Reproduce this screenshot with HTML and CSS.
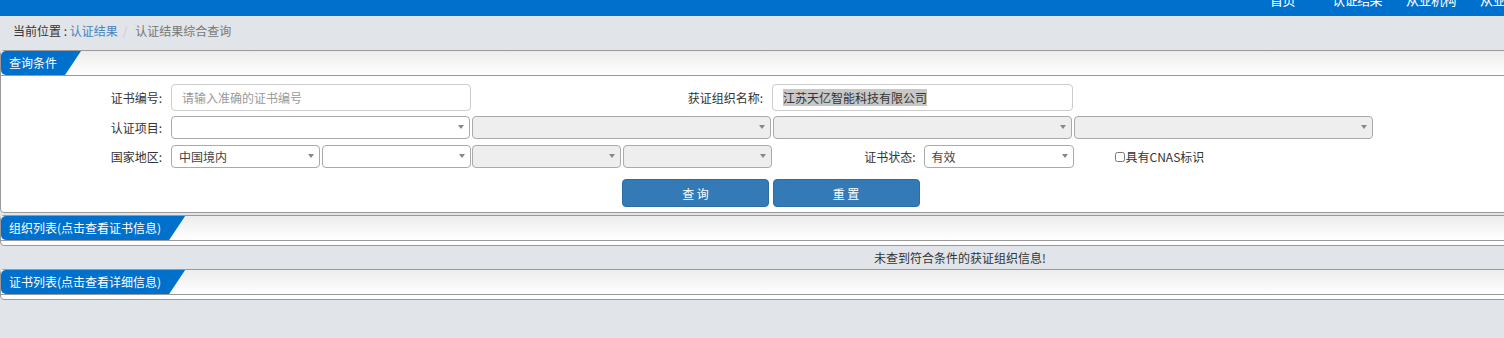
FILE: index.html
```html
<!DOCTYPE html>
<html lang="zh-CN">
  <head>
    <meta charset="UTF-8" />
    <meta name="viewport" content="width=device-width, initial-scale=1.0" />
    <title>认证结果综合查询</title>
    <link rel="stylesheet" href="styles.css">
  </head>

  <body>
    <div class="page">
      <div class="topbar">
        <ul class="nav">
          <li>首页</li>
          <li>认证结果</li>
          <li>从业机构</li>
          <li>从业人员</li>
        </ul>
      </div>

      <ol class="breadcrumb">
        <li>当前位置 : <a href="#">认证结果</a></li>
        <li class="active">认证结果综合查询</li>
      </ol>

      <!-- 查询条件 -->
      <div class="panel">
        <div class="panel__head"><span class="panel__tab">查询条件</span></div>
        <div class="panel__body">
          <div class="row">
            <label class="lbl">证书编号:</label>
            <input class="field field--a" type="text" placeholder="请输入准确的证书编号" />
            <label class="lbl lbl--org">获证组织名称:</label>
            <div class="field field--b"><span class="picked">江苏天亿智能科技有限公司</span></div>
          </div>

          <div class="row row--2">
            <label class="lbl">认证项目:</label>
            <div class="select select--wide"></div>
            <div class="select select--wide select--off"></div>
            <div class="select select--wide select--off"></div>
            <div class="select select--wide select--off"></div>
          </div>

          <div class="row row--3">
            <label class="lbl">国家地区:</label>
            <div class="select select--half">中国境内</div>
            <div class="select select--half"></div>
            <div class="select select--half select--off"></div>
            <div class="select select--half select--off"></div>
            <label class="lbl lbl--status">证书状态:</label>
            <div class="select select--status">有效</div>
            <label class="check"><input type="checkbox" />具有CNAS标识</label>
          </div>

          <div class="actions">
            <button class="btn">查 询</button>
            <button class="btn">重 置</button>
          </div>
        </div>
      </div>

      <!-- 组织列表 -->
      <div class="panel panel--list">
        <div class="panel__head"><span class="panel__tab">组织列表(点击查看证书信息)</span></div>
        <div class="panel__body panel__body--empty"></div>
      </div>
      <div class="message">未查到符合条件的获证组织信息!</div>

      <!-- 证书列表 -->
      <div class="panel panel--list">
        <div class="panel__head"><span class="panel__tab">证书列表(点击查看详细信息)</span></div>
        <div class="panel__body panel__body--empty"></div>
      </div>
    </div>
  </body>
</html>
```

FILE: styles.css
```css
/* CSS Reset */
html {
  box-sizing: border-box;
  font-size: 12px;
  overflow: hidden;
}

*,
*:before,
*:after {
  box-sizing: inherit;
}

body,
ol,
ul {
  margin: 0;
  padding: 0;
}

ol,
ul {
  list-style: none;
}

body {
  background: #e1e5e9;
  color: #333;
  font-family: "Noto Sans CJK SC", "Noto Sans", sans-serif;
  font-size: 12px;
}

.page {
  width: 1920px;
}

/* top bar, page is scrolled a little so the nav is cut off */
.topbar {
  height: 16px;
  background: #0070cd;
  overflow: hidden;
}

.nav {
  display: flex;
  margin-top: -10px;
  padding-left: 1270px;
  color: #fff;
  font-size: 13px;
  line-height: 20px;
  letter-spacing: -0.5px;
}

.nav li {
  margin-right: 24px;
}

.nav li:first-child {
  margin-right: 37px;
}

.breadcrumb {
  display: flex;
  height: 34px;
  padding: 6px 13px 0;
  line-height: 17px;
}

.breadcrumb a {
  color: #4a83bd;
  text-decoration: none;
}

.breadcrumb li + li:before {
  content: "/\00a0";
  padding: 0 5px;
  color: #ccc;
}

.breadcrumb .active {
  color: #777;
}

/* panels */
.panel {
  background: #fff;
  border: 1px solid #999;
  border-radius: 4px;
  margin-bottom: 2px;
}

.panel__head {
  display: flex;
  height: 25px;
  border-bottom: 1px solid #999;
  background: linear-gradient(#ececec, #fff);
}

.panel__tab {
  padding: 0 24px 0 8px;
  line-height: 24px;
  color: #fff;
  background: #0070cd;
  border-radius: 5px 0 0 5px;
  clip-path: polygon(0 0, 100% 0, calc(100% - 16px) 100%, 0 100%);
}

.panel__body {
  padding: 8px 0 5px;
}

.panel__body--empty {
  padding: 0;
  height: 4px;
}

.panel--list {
  margin-bottom: 0;
}

.message {
  line-height: 23px;
  text-align: center;
  color: #333;
}

/* form rows */
.row {
  display: flex;
  align-items: center;
}

.row--2 {
  margin-top: 5px;
}

.row--3 {
  margin-top: 6px;
}

.lbl {
  flex: none;
  width: 161px;
  margin-right: 9px;
  text-align: right;
  color: #333;
}

.lbl--org {
  width: 292px;
}

.lbl--status {
  width: 142.5px;
  margin-right: 8px;
}

.field {
  flex: none;
  height: 27px;
  padding: 0 10px;
  border: 1px solid #ccc;
  border-radius: 4px;
  background: #fff;
  color: #333;
  font: inherit;
  line-height: 25px;
  outline: none;
}

.field::placeholder {
  color: #999;
}

.field--a {
  width: 300px;
}

.field--b {
  width: 301px;
}

/* unfocused selection look */
.picked {
  background: #c8c8c8;
  color: #333;
}

.select {
  position: relative;
  flex: none;
  height: 23px;
  padding-left: 7px;
  border: 1px solid #aaa;
  border-radius: 4px;
  background: #fff;
  color: #444;
  line-height: 21px;
}

.select:after {
  content: "";
  position: absolute;
  right: 5px;
  top: 8px;
  border-top: 4px solid #888;
  border-left: 3px solid transparent;
  border-right: 3px solid transparent;
}

.select--off {
  background: #eee;
}

.select--wide {
  width: 299px;
  margin-right: 2px;
}

.select--half {
  width: 149px;
  margin-right: 1.5px;
}

.select--status {
  width: 150px;
}

.check {
  display: flex;
  align-items: center;
  margin-left: 41px;
  color: #333;
}

.check input {
  width: 10px;
  height: 10px;
  margin: 0 1px 0 0;
}

.actions {
  display: flex;
  gap: 3.5px;
  margin-top: 11px;
  padding-left: 621px;
}

.btn {
  width: 147px;
  height: 28px;
  border: 1px solid #2e6da4;
  border-radius: 4px;
  background: #337ab7;
  color: #fff;
  font: inherit;
  cursor: pointer;
}
```
